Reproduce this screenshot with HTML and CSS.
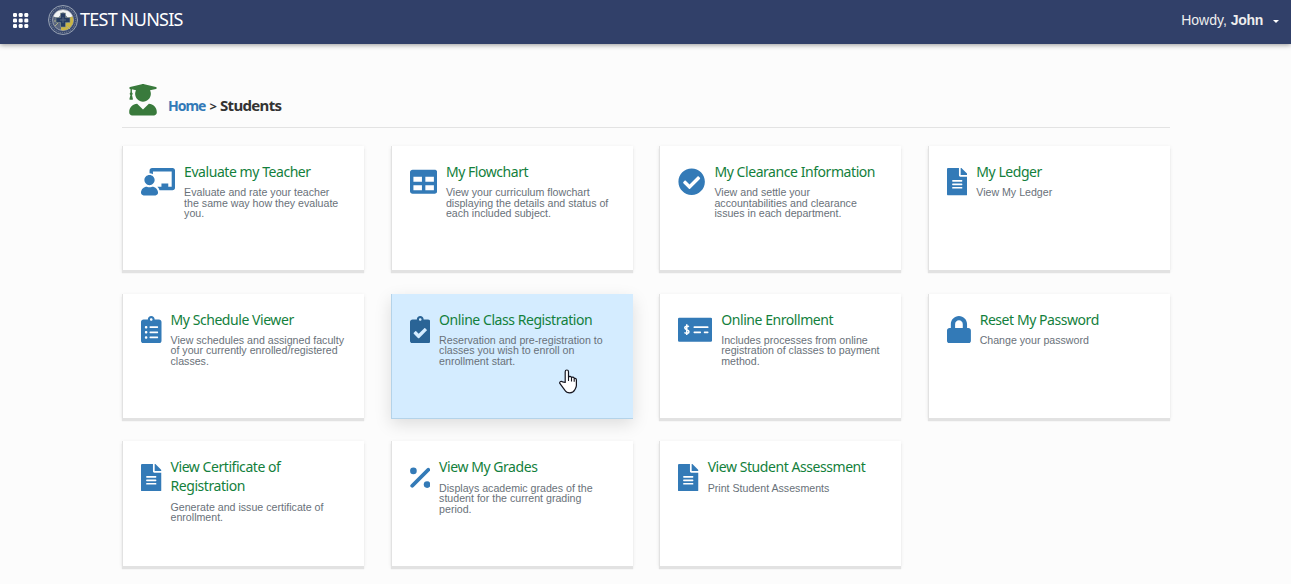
FILE: index.html
```html
<!DOCTYPE html>
<html lang="en">
<head>
<meta charset="utf-8">
<title>TEST NUNSIS</title>
<link rel="stylesheet" href="styles.css">
</head>
<body>
<svg class="defs" width="0" height="0">
  <symbol id="file" viewBox="0 0 384 512"><path d="M224 136V0H24C10.700 0 0 10.700 0 24v464c0 13.300 10.700 24 24 24h336c13.300 0 24-10.700 24-24V160H248c-13.200 0-24-10.800-24-24zm64 236c0 6.600-5.400 12-12 12H108c-6.600 0-12-5.400-12-12v-8c0-6.600 5.400-12 12-12h168c6.600 0 12 5.400 12 12v8zm0-64c0 6.600-5.400 12-12 12H108c-6.600 0-12-5.400-12-12v-8c0-6.600 5.400-12 12-12h168c6.600 0 12 5.400 12 12v8zm0-72v8c0 6.600-5.400 12-12 12H108c-6.600 0-12-5.400-12-12v-8c0-6.600 5.400-12 12-12h168c6.600 0 12 5.400 12 12zM384 121.900v6.100H256V0h6.100c6.400 0 12.500 2.500 17 7l97.900 98c4.500 4.500 7 10.600 7 16.900z"/></symbol>
</svg>
<header class="navbar">
  <svg class="apps" viewBox="0 0 15 15"><g><rect x="0" y="0" width="4" height="4" rx="1.300"/><rect x="5.700" y="0" width="4" height="4" rx="1.300"/><rect x="11.300" y="0" width="4" height="4" rx="1.300"/><rect x="0" y="5.500" width="4" height="4" rx="1.300"/><rect x="5.700" y="5.500" width="4" height="4" rx="1.300"/><rect x="11.300" y="5.500" width="4" height="4" rx="1.300"/><rect x="0" y="11" width="4" height="4" rx="1.300"/><rect x="5.700" y="11" width="4" height="4" rx="1.300"/><rect x="11.300" y="11" width="4" height="4" rx="1.300"/></g></svg>
  <svg class="seal" viewBox="0 0 30 30">
    <circle cx="15" cy="15" r="14.500" fill="#3a4a70" stroke="#98a2b3" stroke-width="1"/>
    <circle cx="15" cy="15" r="12.700" fill="none" stroke="#66728b" stroke-width="1.200" stroke-dasharray="1.200 1"/>
    <circle cx="15" cy="15" r="10.500" fill="#5a6680" stroke="#a9afb8" stroke-width=".8"/>
    <path d="M5.500 11.500a10.200 10.200 0 0 1 19 0L20 13l-5-6-5 6z" fill="#f2f4f5"/>
    <path d="M24.500 11.500A10 10 0 0 1 13 25v-4l7-4v-4z" fill="#c9b545"/>
    <path d="M7 21l3-3M6 16h4M19 21l3 3" stroke="#aeb187" stroke-width="1"/>
    <path d="M12.500 8h5v4.500H22v5h-4.500V22h-5v-4.500H8v-5h4.500z" fill="#263c62" stroke="#8c9891" stroke-width=".6"/>
    <path d="M12 15h6M15 12v6" stroke="#53647f" stroke-width="1"/>
  </svg>
  <span class="brand">TEST NUNSIS</span>
  <div class="user"><span>Howdy, </span><b>John</b><i class="caret"></i></div>
</header>
<main class="page">
  <div class="crumbs">
    <svg class="grad" viewBox="0 0 448 512"><path d="M319.400 320.600L224 416l-95.400-95.400C57.100 323.700 0 382.200 0 454.400v9.600c0 26.500 21.500 48 48 48h352c26.500 0 48-21.500 48-48v-9.600c0-72.200-57.100-130.700-128.600-133.800zM13.600 79.800l6.400 1.500v58.400c-7 4.200-12 11.500-12 20.300 0 8.400 4.600 15.400 11.100 19.700L3.500 242c-1.700 6.900 2.100 14 7.600 14h41.800c5.500 0 9.300-7.100 7.600-14l-15.600-62.300C51.400 175.400 56 168.400 56 160c0-8.800-5-16.100-12-20.300V87.100l66 15.900c-8.600 17.200-14 36.400-14 57 0 70.700 57.300 128 128 128s128-57.300 128-128c0-20.600-5.300-39.800-13.900-57l96.300-23.200c18.200-4.400 18.200-27.100 0-31.500l-190.400-46c-13-3.100-26.700-3.100-39.700 0L13.600 48.200c-18.100 4.400-18.100 27.200 0 31.600z"/></svg>
    <div class="trail"><a class="home">Home</a><span class="sep">&gt;</span><span class="current">Students</span></div>
  </div>
  <div class="grid">
    <article class="card">
      <svg class="icon wide" viewBox="0 0 640 512"><path d="M208 352c-2.400 0-4.800.4-7.100 1.100C188 357.300 174.400 360 160 360s-28-2.700-40.900-6.900c-2.300-.7-4.700-1.100-7.100-1.100C49.900 352-.3 402.500 0 464.600.1 490.900 21.700 512 48 512h224c26.300 0 47.900-21.100 48-47.400.3-62.100-49.900-112.600-112-112.600zm-48-32c53 0 96-43 96-96s-43-96-96-96-96 43-96 96 43 96 96 96zM592 0H208c-26.500 0-48 22.300-48 49.600V96c23.400 0 45.100 6.800 64 17.800V64h352v288h-64v-64H384v64h-76.200c19.100 16.800 33.100 38.700 39.700 64H592c26.500 0 48-22.300 48-49.600V49.600C640 22.300 618.500 0 592 0z"/></svg>
      <div class="text"><h3>Evaluate my Teacher</h3><p>Evaluate and rate your teacher<br>the same way how they evaluate<br>you.</p></div>
    </article>
    <article class="card">
      <svg class="icon full" viewBox="0 0 512 512"><path d="M464 32H48C21.500 32 0 53.500 0 80v352c0 26.500 21.500 48 48 48h416c26.500 0 48-21.500 48-48V80c0-26.500-21.500-48-48-48zM224 416H64v-96h160v96zm0-160H64v-96h160v96zm224 160H288v-96h160v96zm0-160H288v-96h160v96z"/></svg>
      <div class="text"><h3>My Flowchart</h3><p>View your curriculum flowchart<br>displaying the details and status of<br>each included subject.</p></div>
    </article>
    <article class="card">
      <svg class="icon full" viewBox="0 0 512 512"><path d="M504 256c0 137-111 248-248 248S8 393 8 256 119 8 256 8s248 111 248 248zM227.300 387.300l184-184c6.200-6.200 6.200-16.400 0-22.600l-22.600-22.600c-6.200-6.200-16.400-6.200-22.600 0L216 308.100l-70.100-70.100c-6.200-6.200-16.400-6.200-22.600 0l-22.600 22.600c-6.200 6.200-6.200 16.400 0 22.600l104 104c6.200 6.300 16.400 6.300 22.600.1z"/></svg>
      <div class="text"><h3>My Clearance Information</h3><p>View and settle your<br>accountabilities and clearance<br>issues in each department.</p></div>
    </article>
    <article class="card">
      <svg class="icon slim"><use href="#file"/></svg>
      <div class="text"><h3>My Ledger</h3><p>View My Ledger</p></div>
    </article>
    <article class="card">
      <svg class="icon slim" viewBox="0 0 384 512"><path d="M336 64h-80c0-35.300-28.700-64-64-64s-64 28.700-64 64H48C21.500 64 0 85.500 0 112v352c0 26.500 21.500 48 48 48h288c26.500 0 48-21.500 48-48V112c0-26.500-21.500-48-48-48zM96 424c-13.300 0-24-10.700-24-24s10.700-24 24-24 24 10.700 24 24-10.700 24-24 24zm0-96c-13.300 0-24-10.700-24-24s10.700-24 24-24 24 10.700 24 24-10.700 24-24 24zm0-96c-13.300 0-24-10.700-24-24s10.700-24 24-24 24 10.700 24 24-10.700 24-24 24zm96-192c13.300 0 24 10.700 24 24s-10.700 24-24 24-24-10.700-24-24 10.700-24 24-24zm128 368c0 4.400-3.600 8-8 8H168c-4.400 0-8-3.600-8-8v-16c0-4.400 3.600-8 8-8h144c4.400 0 8 3.600 8 8v16zm0-96c0 4.400-3.600 8-8 8H168c-4.400 0-8-3.600-8-8v-16c0-4.400 3.600-8 8-8h144c4.400 0 8 3.600 8 8v16zm0-96c0 4.400-3.600 8-8 8H168c-4.400 0-8-3.600-8-8v-16c0-4.400 3.600-8 8-8h144c4.400 0 8 3.600 8 8v16z"/></svg>
      <div class="text"><h3>My Schedule Viewer</h3><p>View schedules and assigned faculty<br>of your currently enrolled/registered<br>classes.</p></div>
    </article>
    <article class="card active">
      <svg class="icon slim" viewBox="0 0 384 512"><path d="M336 64h-80c0-35.300-28.700-64-64-64s-64 28.700-64 64H48C21.500 64 0 85.500 0 112v352c0 26.500 21.500 48 48 48h288c26.500 0 48-21.500 48-48V112c0-26.500-21.500-48-48-48zM192 40c13.300 0 24 10.700 24 24s-10.700 24-24 24-24-10.700-24-24 10.700-24 24-24zm121.200 231.800l-143 141.800c-4.700 4.700-12.300 4.600-17-.1l-82.600-83.300c-4.700-4.700-4.600-12.300.1-17L99.100 285c4.700-4.700 12.300-4.600 17 .1l46 46.400 106-105.200c4.700-4.700 12.300-4.600 17 .1l28.200 28.400c4.700 4.800 4.600 12.300-.1 17z"/></svg>
      <div class="text"><h3>Online Class Registration</h3><p>Reservation and pre-registration to<br>classes you wish to enroll on<br>enrollment start.</p></div>
      <svg class="cursor" viewBox="0 0 18 25"><path d="M6.200 13.500V2.800c0-2.400 3.300-2.400 3.300 0v5.400c.6-1.200 2.700-1 3 .4.700-.9 2.600-.6 2.800.9.900-.5 2.100 0 2.100 1.500v5.600c0 1.700-1 3-1.600 4.200-.8 1.700-2.200 3-5 3-2.400 0-4-1-5-2.600L1 14.700c-1-1.700 1-3.200 2.500-1.800z" fill="#fff" stroke="#15151f" stroke-width="1.200" stroke-linejoin="round"/><path d="M9.500 8v4M12.500 8.800v3.700M15.200 9.800v3" stroke="#15151f" stroke-width="1.100"/></svg>
    </article>
    <article class="card">
      <svg class="icon wide" viewBox="0 0 640 512"><path fill-rule="evenodd" d="M24 32h592a24 24 0 0 1 24 24v400a24 24 0 0 1-24 24H24a24 24 0 0 1-24-24V56a24 24 0 0 1 24-24zM304 192h256a12 12 0 0 1 12 12v8a12 12 0 0 1-12 12H304a12 12 0 0 1-12-12v-8a12 12 0 0 1 12-12zM304 288h116a12 12 0 0 1 12 12v8a12 12 0 0 1-12 12H304a12 12 0 0 1-12-12v-8a12 12 0 0 1 12-12zM496 288h64a12 12 0 0 1 12 12v8a12 12 0 0 1-12 12h-64a12 12 0 0 1-12-12v-8a12 12 0 0 1 12-12z"/><path d="M204 200c-18-17-77-20-77 19 0 43 79 28 79 73 0 37-58 38-85 15M164 155v200" fill="none" stroke="#fff" stroke-width="29"/></svg>
      <div class="text"><h3>Online Enrollment</h3><p>Includes processes from online<br>registration of classes to payment<br>method.</p></div>
    </article>
    <article class="card">
      <svg class="icon lock" viewBox="0 0 448 512"><path d="M400 224h-24v-72C376 68.200 307.800 0 224 0S72 68.200 72 152v72H48c-26.500 0-48 21.500-48 48v192c0 26.500 21.500 48 48 48h352c26.500 0 48-21.500 48-48V272c0-26.500-21.500-48-48-48zm-104 0H152v-72c0-39.700 32.300-72 72-72s72 32.300 72 72v72z"/></svg>
      <div class="text"><h3>Reset My Password</h3><p>Change your password</p></div>
    </article>
    <article class="card">
      <svg class="icon slim"><use href="#file"/></svg>
      <div class="text"><h3>View Certificate of<br>Registration</h3><p>Generate and issue certificate of<br>enrollment.</p></div>
    </article>
    <article class="card">
      <svg class="icon slim" viewBox="0 0 384 512"><circle cx="64" cy="128" r="62"/><circle cx="320" cy="384" r="62"/><path d="M42 406L342 106" stroke="#337ab7" stroke-width="72" stroke-linecap="round"/></svg>
      <div class="text"><h3>View My Grades</h3><p>Displays academic grades of the<br>student for the current grading<br>period.</p></div>
    </article>
    <article class="card">
      <svg class="icon slim"><use href="#file"/></svg>
      <div class="text"><h3>View Student Assessment</h3><p>Print Student Assesments</p></div>
    </article>
  </div>
</main>
</body>
</html>
```
FILE: styles.css
```css
* { box-sizing: border-box; }
html, body { margin: 0; height: 584px; overflow: hidden; }
body { background: #fcfcfc; font-family: "Liberation Sans", Arial, sans-serif; }
.defs { display: block; }
.navbar { height: 44px; background: #314069; display: flex; align-items: center; padding: 0 12px 4px 13px; box-shadow: 0 1px 5px rgba(0,0,0,.4); color: #fff; }
.apps { width: 15px; height: 15px; fill: #fff; overflow: visible; }
.seal { width: 30px; height: 30px; margin-left: 20px; }
.brand { font: 18px/24px "Noto Sans", sans-serif; letter-spacing: -.75px; margin-left: 2px; padding-bottom: 2px; }
.user { margin-left: auto; display: flex; align-items: center; font-size: 14px; white-space: pre; color: #eee; }
.user b { letter-spacing: -.3px; }
.caret { border: 3px solid transparent; border-top-color: #fff; border-bottom: 0; margin: 3px 0 0 10px; }
.page { width: 1048px; margin-left: 122px; padding-top: 40px; }
.crumbs { height: 44px; border-bottom: 1px solid #e3e3e3; display: flex; padding-left: 7px; }
.grad { width: 28px; height: 31.500px; fill: #397a3c; }
.trail { margin: 10px 0 0 11px; font: bold 15px/22px "Noto Sans", sans-serif; color: #333; display: flex; align-items: baseline; }
.home { color: #337ab7; font-size: 14px; letter-spacing: -1px; }
.sep { font-size: 13px; margin: 0 3px 0 4px; }
.current { letter-spacing: -.65px; }
.grid { display: grid; grid-template-columns: repeat(4, 242.2px); grid-auto-rows: 124.4px; column-gap: 26.4px; row-gap: 23.300px; margin-top: 18px; }
.card { position: relative; background: #fff; border-left: 1px solid #e2e2e2; box-shadow: 0 3px 1px #e2e2e2, 0 1px 4px rgba(0,0,0,.08); display: flex; align-items: flex-start; padding: 16px 0 0 18px; }
.icon { height: 27.500px; fill: #337ab7; flex: none; margin: 6.300px 9px 0 0; }
.wide { width: 34.100px; }
.full { width: 27.300px; }
.slim { width: 20.500px; }
.lock { width: 23.900px; }
.text { white-space: nowrap; }
h3 { margin: 0; font: 14px/19px "Noto Sans", sans-serif; letter-spacing: -.44px; color: #13803c; }
p { margin: 6.200px 0 0; font-size: 10.640px; line-height: 10.500px; color: #697179; }
.active { background: #d4ecff; border-left-color: #b4d3e9; box-shadow: 0 1px 0 #b4d3e9, 0 6px 16px rgba(0,0,0,.13); }
.active .icon { fill: #2a6496; }
.cursor { position: absolute; left: 167px; top: 75.500px; width: 18px; height: 25px; }
```
